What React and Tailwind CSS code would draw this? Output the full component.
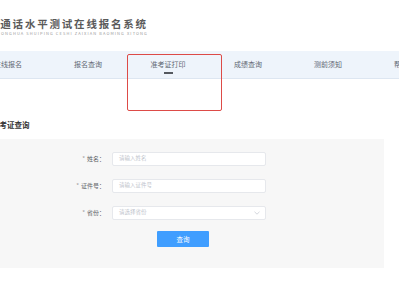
import React from "react";

const navItems = ["在线报名", "报名查询", "准考证打印", "成绩查询", "测前须知", "帮助中心"];

function Field({ label, placeholder, select }) {
  return (
    <div className="flex items-center h-[14px]">
      <div className="w-[106px] text-right pr-[1px] text-[6px] leading-none text-[#606266]">
        <span className="text-[#a0a0a0] mr-[2px]">*</span>
        {label}：
      </div>
      <div className="ml-[6px] w-[154px] h-[14px] bg-white border border-[#e6e8ec] rounded-[2px] flex items-center justify-between px-[6px]">
        <span className="text-[5.5px] leading-none text-[#c0c4cc]">{placeholder}</span>
        {select && (
          <svg width="6" height="4" viewBox="0 0 6 4" className="mr-[-1px]">
            <path d="M0.5 0.8 L3 3.2 L5.5 0.8" fill="none" stroke="#c8ccd3" strokeWidth="0.8" />
          </svg>
        )}
      </div>
    </div>
  );
}

export default function App() {
  return (
    <div
      className="relative w-[399px] h-[300px] overflow-hidden bg-white"
      style={{ fontFamily: '"Noto Sans CJK SC", "Noto Sans", sans-serif' }}
    >
      {/* header */}
      <div className="h-[51px] pt-[16px] ml-[-12px]">
        <div className="text-[10.5px] leading-[15px] font-bold tracking-[1.8px] text-[#5a5a5a] whitespace-nowrap">
          普通话水平测试在线报名系统
        </div>
        <div className="mt-[0px] text-[4px] leading-[5px] tracking-[1.1px] text-[#9a9a9a] whitespace-nowrap pl-[2px]">
          PUTONGHUA SHUIPING CESHI ZAIXIAN BAOMING XITONG
        </div>
      </div>

      {/* nav */}
      <div className="h-[28px] bg-[#eef4fb] border-b border-[#dde6f1] flex ml-[-32px]">
        {navItems.map((t, i) => (
          <div key={t} className="w-[80px] shrink-0 flex flex-col items-center justify-center relative">
            <span className="text-[7px] leading-none text-[#626873] whitespace-nowrap">{t}</span>
            {i === 2 && <span className="absolute top-[21px] w-[9px] h-[1.5px] bg-[#55595f]" />}
          </div>
        ))}
      </div>

      {/* section heading */}
      <div className="mt-[40px] ml-[-8px] h-[12px] text-[7.5px] leading-[12px] font-bold text-[#333]">
        准考证查询
      </div>

      {/* panel */}
      <div className="mt-[8px] w-[384px] h-[129px] bg-[#f7f7f7] pt-[13px] flex flex-col gap-[13px]">
        <Field label="姓名" placeholder="请输入姓名" />
        <Field label="证件号" placeholder="请输入证件号" />
        <Field label="省份" placeholder="请选择省份" select />
        <div className="ml-[157px] mt-[-2px] w-[52px] h-[16px] bg-[#409eff] rounded-[1px] flex items-center justify-center">
          <span className="text-[6.5px] leading-none text-white">查询</span>
        </div>
      </div>

      {/* red annotation box */}
      <div className="absolute left-[127px] top-[54px] w-[95px] h-[57px] border-[1.5px] border-[#dd4b47] rounded-[2px]" />
    </div>
  );
}
